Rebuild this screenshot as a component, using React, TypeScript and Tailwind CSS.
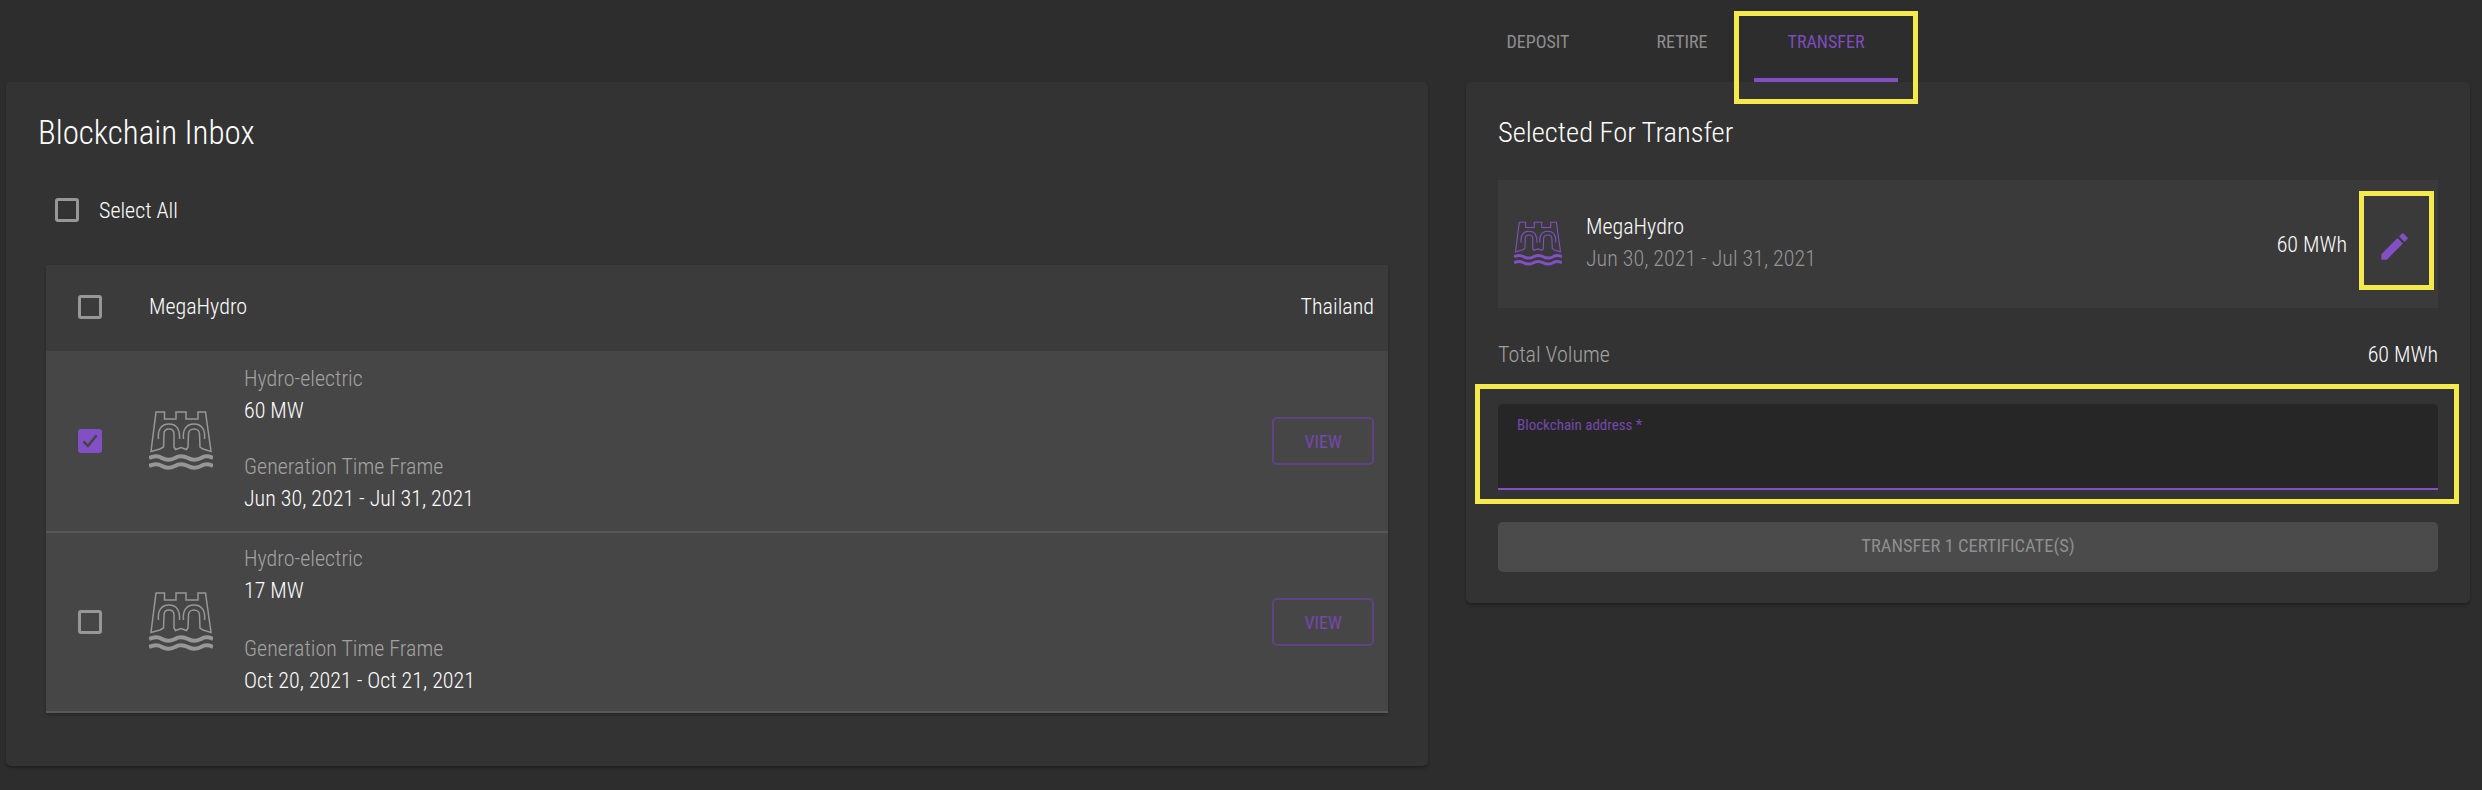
const HydroIcon = ({ className }: { className: string }) => (
  <svg viewBox="0 0 64 60" className={className} fill="none" stroke="currentColor">
    <path strokeWidth="1.5" d="M7 1H15.500V8H27V1H37V8H49V1H56.500L62 40.500L54 38L51 36L50.500 23C50.500 20 48 18 45 18C42 18 39.500 20 39.500 23L39 36L37.500 38.500L32 36.500L26.500 38.500L25 36L25 23C25 20 23 18 20 18C17 18 15 20 15 23L14.500 36L11 38L2 40.500Z" />
    <path strokeWidth="1.5" d="M9.500 28C8.500 19 12 13 20 13C28 13 31 19 30.500 28M34.500 28C33.500 19 37 13 45 13C53 13 56.500 19 55.500 28" />
    <path strokeWidth="4" d="M0 47C5 44.500 9 44.500 13 47C17 49.500 21 49.500 26 47C30 44.500 34 44.500 39 47C43 49.500 47 49.500 52 47C56 44.500 60 45 64 47" />
    <path strokeWidth="4" d="M0 55C5 52.500 9 52.500 13 55C17 57.500 21 57.500 26 55C30 52.500 34 52.500 39 55C43 57.500 47 57.500 52 55C56 52.500 60 53 64 55" />
  </svg>
);

const Box = ({ checked = false }: { checked?: boolean }) =>
  checked ? (
    <div className="flex h-6 w-6 shrink-0 items-center justify-center rounded-[3px] bg-[#8250c4]">
      <svg viewBox="0 0 24 24" className="h-5 w-5 text-[#444444]" fill="none" stroke="currentColor" strokeWidth="3">
        <path d="M4 12.500L9.500 18L20 5" />
      </svg>
    </div>
  ) : (
    <div className="h-6 w-6 shrink-0 rounded-[3px] border-[3px] border-[#979797]" />
  );

const Row = ({
  checked,
  mw,
  dates,
  rowClass,
  gapClass,
}: {
  checked?: boolean;
  mw: string;
  dates: string;
  rowClass: string;
  gapClass: string;
}) => (
  <div className={`flex items-center border-b-2 border-[#585858] bg-[#464646] pl-8 pr-[14px] ${rowClass}`}>
    <Box checked={checked} />
    <div className="ml-[47px] mr-[31px] text-[#979797]">
      <HydroIcon className="h-[60px] w-16" />
    </div>
    <div className="mb-1 flex-1 text-[22px] leading-8">
      <div className="text-[#a2a2a2]">Hydro-electric</div>
      <div className={`text-white ${gapClass}`}>{mw}</div>
      <div className="text-[#a2a2a2]">Generation Time Frame</div>
      <div className="text-white">{dates}</div>
    </div>
    <button className="flex h-12 w-[102px] items-center justify-center rounded-[5px] border-2 border-[#5f4389] text-[18px] font-normal text-[#7548ad]">
      VIEW
    </button>
  </div>
);

export default function App() {
  return (
    <div className="flex h-[790px] w-full overflow-hidden bg-[#2d2d2d] font-['Roboto','Liberation_Sans',sans-serif] font-[350] [font-stretch:75%]">
      <main className="ml-[6px] mt-[82px] h-[684px] w-[1422px] shrink-0 rounded-[5px] bg-[#333333] shadow-[0_2px_3px_rgba(0,0,0,0.3)]">
        <h2 className="ml-[32px] mt-[30px] text-[33px] font-light leading-[42px] text-white">Blockchain Inbox</h2>
        <div className="ml-[49px] mt-[44px] flex h-6 items-center gap-5">
          <Box />
          <span className="text-[22px] text-white">Select All</span>
        </div>
        <div className="ml-[40px] mt-[43px] w-[1342px] shadow-[0_2px_3px_rgba(0,0,0,0.25)]">
          <div className="flex h-[86px] items-center bg-[#3b3b3b] pb-[3px] pl-8 pr-[14px] text-[22px] text-white">
            <Box />
            <span className="ml-[47px] flex-1">MegaHydro</span>
            <span>Thailand</span>
          </div>
          <Row checked mw="60 MW" dates="Jun 30, 2021 - Jul 31, 2021" rowClass="h-[182px]" gapClass="mb-6" />
          <Row mw="17 MW" dates="Oct 20, 2021 - Oct 21, 2021" rowClass="h-[180px]" gapClass="mb-[26px]" />
        </div>
      </main>

      <section className="ml-[38px] w-[1004px] shrink-0">
        <nav className="flex h-[82px] text-[18px] font-normal">
          <div className="flex h-[82px] w-36 items-center justify-center text-[#8d8d8d]">DEPOSIT</div>
          <div className="flex h-[82px] w-36 items-center justify-center text-[#8d8d8d]">RETIRE</div>
          <div className="relative flex h-[82px] w-36 items-center justify-center text-[#7d4cbd]">
            TRANSFER
            <div className="absolute bottom-0 left-0 h-1 w-36 bg-[#8250c4]" />
            <div className="absolute left-[-20px] top-[11px] h-[93px] w-[184px] border-[5px] border-[#f5ea4d]" />
          </div>
        </nav>
        <div className="h-[521px] rounded-[5px] bg-[#333333] px-8 pt-[33px] shadow-[0_2px_3px_rgba(0,0,0,0.3)]">
          <h2 className="text-[28.500px] font-light leading-9 text-white">Selected For Transfer</h2>
          <div className="relative mt-[29px] flex h-32 items-center bg-[#3a3a3a] pl-4 pr-[91px]">
            <HydroIcon className="h-[46px] w-12 text-[#8250c4]" />
            <div className="mb-[2px] ml-6 flex-1 text-[22px] leading-8">
              <div className="text-white">MegaHydro</div>
              <div className="text-[#959595]">Jun 30, 2021 - Jul 31, 2021</div>
            </div>
            <span className="text-[22px] text-white">60 MWh</span>
            <div className="absolute left-[861px] top-[11px] flex h-[99px] w-[75px] items-center justify-center border-[5px] border-[#f5ea4d] pr-1 pt-3">
              <svg viewBox="0 0 24 24" className="h-[35px] w-[35px] fill-[#8250c4]">
                <path d="M3 17.250V21h3.750L17.810 9.940l-3.750-3.750L3 17.250zM20.710 7.040c.39-.39.39-1.020 0-1.410l-2.340-2.340a.996.996 0 0 0-1.410 0l-1.830 1.830 3.750 3.750 1.830-1.830z" />
              </svg>
            </div>
          </div>
          <div className="mt-[31px] flex items-center justify-between text-[22px] leading-8">
            <span className="text-[#a2a2a2]">Total Volume</span>
            <span className="text-white">60 MWh</span>
          </div>
          <div className="relative mt-[33px] h-[86px] rounded-t-[5px] border-b-2 border-[#8250c4] bg-[#262626] px-[19px] pt-[11px] text-[15px] font-normal leading-5 text-[#7548ad]">
            Blockchain address *
            <div className="absolute left-[-23px] top-[-20px] h-[120px] w-[984px] border-[5px] border-[#f5ea4d]" />
          </div>
          <button className="mt-8 flex h-[50px] w-full items-center justify-center rounded-[5px] bg-[#4b4b4b] text-[18.500px] font-normal text-[#8f8f8f]">
            TRANSFER 1 CERTIFICATE(S)
          </button>
        </div>
      </section>
    </div>
  );
}
